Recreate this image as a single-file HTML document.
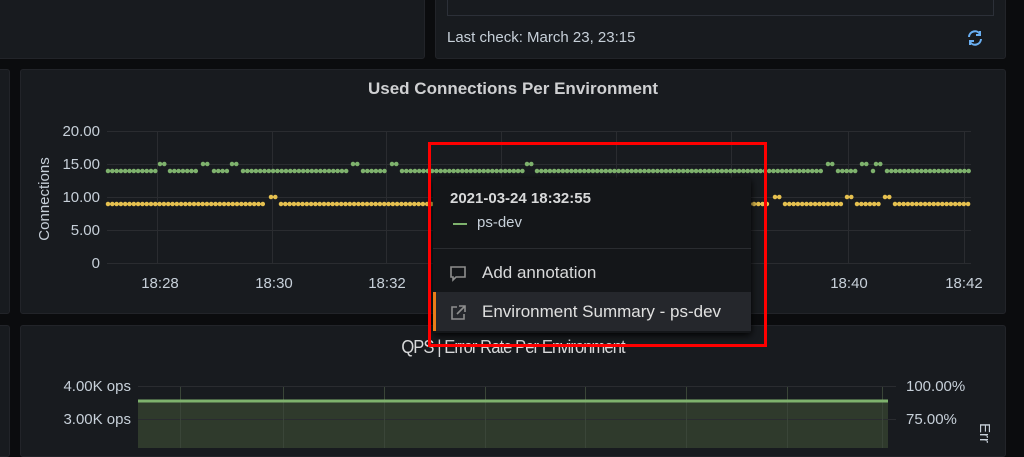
<!DOCTYPE html>
<html><head><meta charset="utf-8"><style>
body{margin:0;width:1024px;height:448px;background:#0b0c0e;overflow:hidden;position:relative;font-family:"Liberation Sans",sans-serif;color:#ccccdc}
.p{position:absolute;background:#181b1f;border:1px solid #222429;border-radius:3px}
.t{position:absolute;font-size:17px;color:#d8d9da}
.s{position:absolute;font-size:15px;color:#c7d0d9}
</style></head><body>
<div class="p" style="left:-5px;top:-5px;width:428px;height:62px"></div>
<div class="p" style="left:435px;top:-5px;width:569px;height:62px"></div>
<div style="position:absolute;left:447px;top:-5px;width:545px;height:20px;border:1px solid #2c3038;border-top:none"></div>
<div class="s" style="left:447px;top:29px">Last check: March 23, 23:15</div>
<svg style="position:absolute;left:966px;top:29px" width="18" height="18" viewBox="0 0 18 18"><path d="M3 8a6 6 0 0 1 11-3M15 10a6 6 0 0 1-11 3" stroke="#6ab0f3" stroke-width="2" fill="none"/><path d="M14 2v4h-4M4 16v-4h4" stroke="#6ab0f3" stroke-width="2" fill="none"/></svg>
<div class="p" style="left:-5px;top:69px;width:13px;height:243px"></div>
<div class="p" style="left:20px;top:69px;width:984px;height:243px"></div>
<div class="t" style="left:20px;width:986px;text-align:center;top:79px;font-weight:bold;color:#cfd0d2">Used Connections Per Environment</div>
<svg style="position:absolute;left:0;top:0" width="1024" height="320">
<g stroke="#2a2c30" stroke-width="1">
<line x1="107" y1="131.5" x2="971" y2="131.5"/><line x1="107" y1="164.5" x2="971" y2="164.5"/><line x1="107" y1="197.5" x2="971" y2="197.5"/><line x1="107" y1="230.5" x2="971" y2="230.5"/><line x1="107" y1="263.5" x2="971" y2="263.5"/>
<line x1="157.5" y1="131" x2="157.5" y2="264"/><line x1="272.5" y1="131" x2="272.5" y2="264"/><line x1="386.5" y1="131" x2="386.5" y2="264"/><line x1="501.5" y1="131" x2="501.5" y2="264"/><line x1="616.5" y1="131" x2="616.5" y2="264"/><line x1="731.5" y1="131" x2="731.5" y2="264"/><line x1="848.5" y1="131" x2="848.5" y2="264"/><line x1="964.5" y1="131" x2="964.5" y2="264"/>
</g>
<g stroke="#7eb26d" stroke-width="4.5" stroke-linecap="round" stroke-dasharray="0 4.3">
<path d="M108 171H156M170 171H199M214 171H228M243 171H349M363 171H388M402 171H523M537 171H824M838 171H857M873 171H874M887 171H970"/>
<path d="M160 164H166M203 164H210M232 164H239M353 164H359M392 164H398M527 164H533M828 164H834M862 164H868M876 164H883"/>
</g>
<g stroke="#e5c04f" stroke-width="4.5" stroke-linecap="round" stroke-dasharray="0 4.3">
<path d="M108 204H267M281 204H769M785 204H843M857 204H881M895 204H970"/>
<path d="M271 197H277M775 197H781M847 197H853M885 197H891"/>
</g>
<g fill="#c7d0d9" font-size="15" font-family="Liberation Sans">
<text x="100" y="136" text-anchor="end">20.00</text><text x="100" y="169" text-anchor="end">15.00</text><text x="100" y="202" text-anchor="end">10.00</text><text x="100" y="235" text-anchor="end">5.00</text><text x="100" y="268" text-anchor="end">0</text>
<text x="160" y="288" text-anchor="middle">18:28</text><text x="274" y="288" text-anchor="middle">18:30</text><text x="387" y="288" text-anchor="middle">18:32</text><text x="849" y="288" text-anchor="middle">18:40</text><text x="964" y="288" text-anchor="middle">18:42</text>
<text transform="translate(49 199) rotate(-90)" text-anchor="middle">Connections</text>
</g>
</svg>
<div class="p" style="left:-5px;top:325px;width:13px;height:130px"></div>
<div class="p" style="left:20px;top:325px;width:984px;height:130px"></div>
<div class="t" style="left:20px;width:986px;text-align:center;top:337px;font-size:18px;letter-spacing:-1px;transform:scaleX(0.92)">QPS | Error Rate Per Environment</div>
<svg style="position:absolute;left:0;top:325px" width="1024" height="123">
<rect x="138" y="76" width="750" height="50" fill="#2f3a2c"/>
<g stroke="#2a2c30"><line x1="138" y1="61.5" x2="896" y2="61.5"/><line x1="138" y1="94.5" x2="896" y2="94.5"/></g>
<g stroke="#3a4538"><line x1="180.5" y1="62" x2="180.5" y2="123"/><line x1="283.5" y1="62" x2="283.5" y2="123"/><line x1="384.5" y1="62" x2="384.5" y2="123"/><line x1="485.5" y1="62" x2="485.5" y2="123"/><line x1="585.5" y1="62" x2="585.5" y2="123"/><line x1="686.5" y1="62" x2="686.5" y2="123"/><line x1="787.5" y1="62" x2="787.5" y2="123"/><line x1="882.5" y1="62" x2="882.5" y2="123"/></g>
<line x1="138" y1="76" x2="888" y2="76" stroke="#7eb26d" stroke-width="3"/>
<g fill="#c7d0d9" font-size="15" font-family="Liberation Sans">
<text x="131" y="66" text-anchor="end">4.00K ops</text><text x="131" y="99" text-anchor="end">3.00K ops</text>
<text x="906" y="66">100.00%</text><text x="906" y="99">75.00%</text>
<text transform="translate(980 98) rotate(90)">Err</text>
</g>
</svg>
<div style="position:absolute;left:433px;top:178px;width:318px;height:155px;background:#141619;box-shadow:0 2px 8px #000;border-radius:2px">
<div style="position:absolute;left:17px;top:12px;font-size:15px;font-weight:bold;color:#d8d9da">2021-03-24 18:32:55</div>
<div style="position:absolute;left:20px;top:45px;width:14px;height:2px;background:#7eb26d"></div>
<div style="position:absolute;left:44px;top:36px;font-size:15px;color:#c7d0d9">ps-dev</div>
<div style="position:absolute;left:0;top:70px;width:318px;height:1px;background:#2a2c30"></div>
<svg style="position:absolute;left:15px;top:86px" width="20" height="20" viewBox="0 0 20 20"><path d="M3 3h14v10H8l-3 3v-3H3z" stroke="#8e8e8e" stroke-width="1.6" fill="none"/></svg>
<div style="position:absolute;left:49px;top:85px;font-size:17px;color:#d8d9da">Add annotation</div>
<div style="position:absolute;left:0;top:114px;width:315px;height:39px;background:#25272c;border-left:3px solid #eb7b18"></div>
<svg style="position:absolute;left:15px;top:125px" width="20" height="20" viewBox="0 0 20 20"><path d="M9 4H4v12h12v-5M11 3h6v6M17 3l-8 8" stroke="#8e8e8e" stroke-width="1.6" fill="none"/></svg>
<div style="position:absolute;left:49px;top:124px;font-size:17px;color:#e0e0e0">Environment Summary - ps-dev</div>
</div>
<div style="position:absolute;left:428px;top:142px;width:333px;height:199px;border:3px solid #ff0000"></div>
</body></html>
